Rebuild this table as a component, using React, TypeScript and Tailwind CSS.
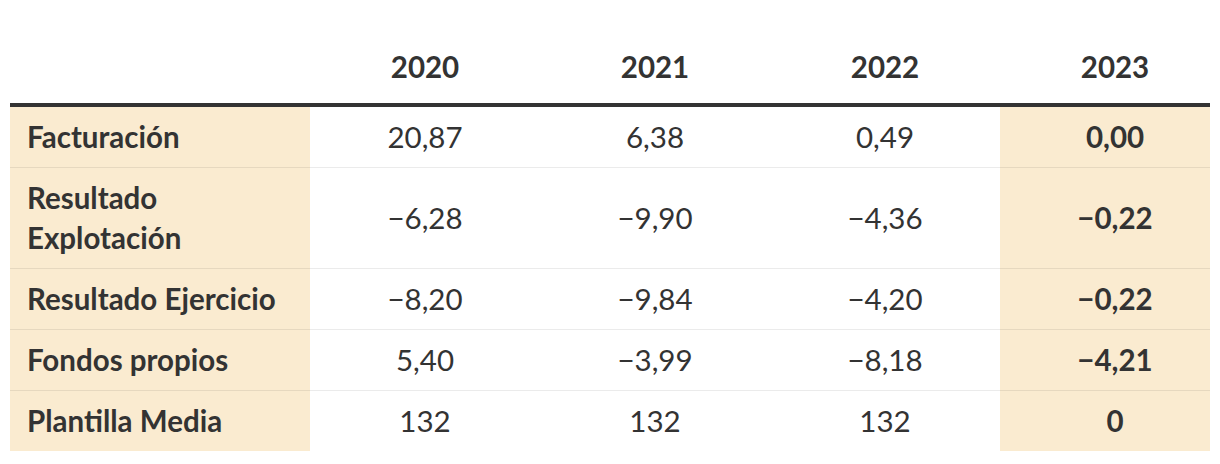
const rows = [
  { label: "Facturación", values: ["20,87", "6,38", "0,49"], last: "0,00" },
  { label: "Resultado Explotación", values: ["−6,28", "−9,90", "−4,36"], last: "−0,22", narrow: true },
  { label: "Resultado Ejercicio", values: ["−8,20", "−9,84", "−4,20"], last: "−0,22" },
  { label: "Fondos propios", values: ["5,40", "−3,99", "−8,18"], last: "−4,21" },
  { label: "Plantilla Media", values: ["132", "132", "132"], last: "0" },
];

const years = ["2020", "2021", "2022"];

const App = () => (
  <div className="w-[1220px] h-[464px] bg-white px-[10px] pt-[28px] font-['Lato','Liberation_Sans',sans-serif] text-[#333333]">
    <table className="w-[1200px] table-fixed border-collapse text-[29.5px] leading-[40px]">
      <colgroup>
        <col className="w-[300px]" />
        <col className="w-[230px]" />
        <col className="w-[230px]" />
        <col className="w-[230px]" />
        <col className="w-[210px]" />
      </colgroup>
      <thead>
        <tr className="border-b-4 border-[#333333]">
          <th className="h-[77px]" />
          {years.map((y) => (
            <th key={y} className="font-bold text-center align-middle pt-[2px]">
              {y}
            </th>
          ))}
          <th className="font-bold text-center align-middle pt-[2px] pl-[20px]">2023</th>
        </tr>
      </thead>
      <tbody>
        {rows.map((r) => (
          <tr key={r.label} className="border-b border-[rgba(0,0,0,0.08)] last:border-b-0">
            <td className="bg-[#faebd0] pl-[17px] pr-[10px] py-[10px] font-bold text-left align-middle">
              {r.narrow ? (
                <>
                  Resultado
                  <br />
                  Explotación
                </>
              ) : (
                r.label
              )}
            </td>
            {r.values.map((v, i) => (
              <td key={i} className="text-center align-middle py-[10px]">
                {v}
              </td>
            ))}
            <td className="bg-[#faebd0] text-center align-middle font-bold py-[10px] pl-[20px]">{r.last}</td>
          </tr>
        ))}
      </tbody>
    </table>
  </div>
);

export default App;
